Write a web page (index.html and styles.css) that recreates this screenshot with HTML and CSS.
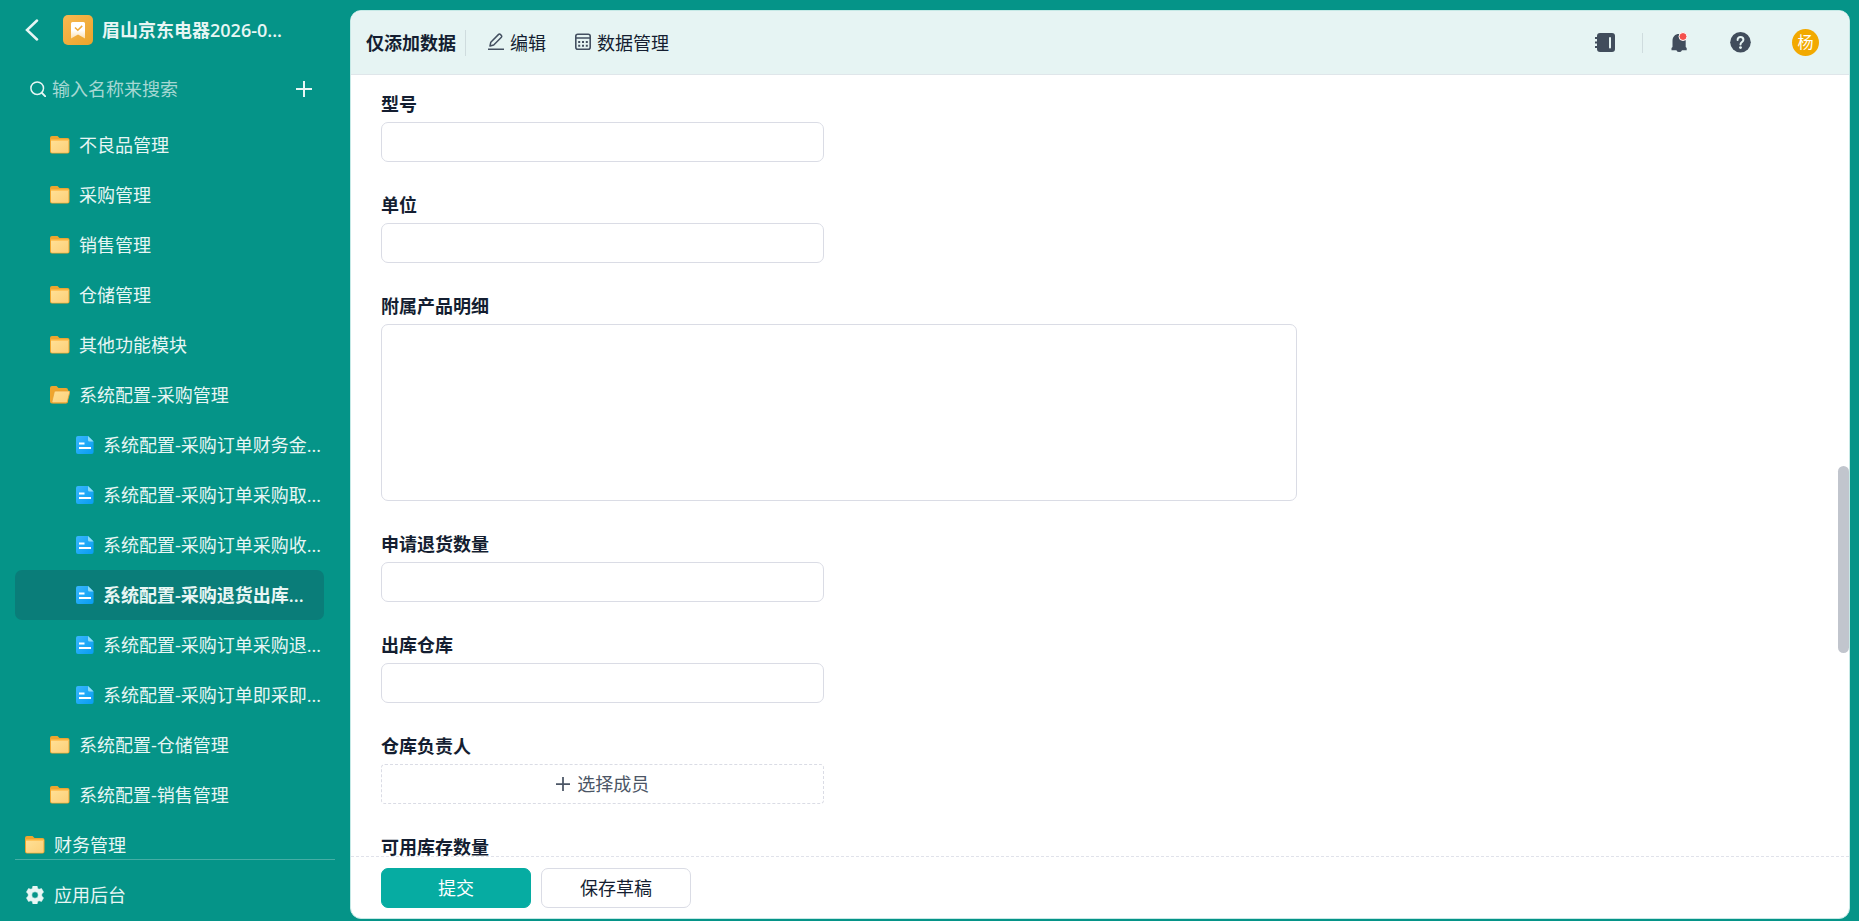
FILE: index.html
```html
<!DOCTYPE html>
<html lang="zh-CN">
<head>
    <meta charset="UTF-8">
    <meta name="viewport" content="width=device-width, initial-scale=1.0">
    <title>仅添加数据</title>
    <link rel="stylesheet" href="styles.css">
</head>
<body>

<!-- shared icons -->
<svg class="sprite" aria-hidden="true">
    <defs>
        <linearGradient id="folder-front" x1="0" y1="0" x2="1" y2="1">
            <stop offset="0" stop-color="#ffe096"/>
            <stop offset="1" stop-color="#fdd078"/>
        </linearGradient>
        <linearGradient id="doc-fill" x1="0" y1="0" x2="1" y2="1">
            <stop offset="0" stop-color="#38b6ff"/>
            <stop offset="1" stop-color="#089cf0"/>
        </linearGradient>
        <linearGradient id="app-fill" x1="0" y1="0" x2="1" y2="1">
            <stop offset="0" stop-color="#f8b851"/>
            <stop offset="1" stop-color="#eba42b"/>
        </linearGradient>
        <linearGradient id="app-flag" x1="0" y1="0" x2="0" y2="1">
            <stop offset="0.5" stop-color="#ffffff"/>
            <stop offset="1" stop-color="#fbdfae"/>
        </linearGradient>
    </defs>
    <symbol id="icon-folder" viewBox="0 0 20 18">
        <path d="M2 0h5.500l2 2H17.500a2 2 0 0 1 2 2v11.500a2 2 0 0 1-2 2H2a2 2 0 0 1-2-2V2a2 2 0 0 1 2-2z" fill="#efa52e"/>
        <path d="M1 4h17.500v11.500a1.200 1.200 0 0 1-1.200 1.200H2.200A1.200 1.200 0 0 1 1 15.500z" fill="url(#folder-front)"/>
        <path d="M1 3.500h17.500v1.500H1z" fill="#ffc45c"/>
    </symbol>
    <symbol id="icon-folder-open" viewBox="0 0 20 18">
        <path d="M2 0h4.500l2 2H16a2 2 0 0 1 2 2v11.500a2 2 0 0 1-2 2H2a2 2 0 0 1-2-2V2a2 2 0 0 1 2-2z" fill="#efa52e"/>
        <path d="M5.800 5h12.700a1.200 1.200 0 0 1 1.200 1.500L17.400 15.600a1.600 1.600 0 0 1-1.600 1.200H3.200a1.200 1.200 0 0 1-1.200-1.500L4.200 6.200A1.600 1.600 0 0 1 5.800 5z" fill="url(#folder-front)" stroke="#e9a030" stroke-width=".8"/>
    </symbol>
    <symbol id="icon-doc" viewBox="0 0 18 18">
        <path d="M2 0h10l5.600 5.600V16a2 2 0 0 1-2 2H2a2 2 0 0 1-2-2V2a2 2 0 0 1 2-2z" fill="url(#doc-fill)"/>
        <path d="M12 0l5.600 5.600h-4.100A1.500 1.500 0 0 1 12 4.100z" fill="#8fdcf8"/>
        <path d="M3 7.500h5.500M3 12h12" stroke="#fff" stroke-width="2"/>
    </symbol>
    <symbol id="icon-plus" viewBox="0 0 16 16">
        <path d="M8 0v16M0 8h16" stroke="currentColor"/>
    </symbol>
</svg>

<div class="app">
    <aside class="sidebar">
        <div class="app-head">
            <button class="icon-btn back" type="button" aria-label="返回">
                <svg width="14" height="22" viewBox="0 0 14 22"><path d="M12 1.500L2 11l10 9.500" fill="none" stroke="currentColor" stroke-width="2.500" stroke-linecap="round"/></svg>
            </button>
            <svg class="app-logo" width="30" height="30" viewBox="0 0 30 30">
                <rect width="30" height="30" rx="5" fill="url(#app-fill)"/>
                <path d="M9.500 7h11a1.500 1.500 0 0 1 1.500 1.500V23.500l-7-4-7 4V8.500A1.500 1.500 0 0 1 9.500 7z" fill="url(#app-flag)"/>
                <path d="M12 12.500l2.800 2.800 4.400-4.400" fill="none" stroke="#efaa38" stroke-width="1.500"/>
            </svg>
            <span class="app-name">眉山京东电器2026-0...</span>
        </div>

        <div class="search">
            <svg width="16" height="16" viewBox="0 0 16 16"><path d="M12 12l3.300 3.300" stroke="currentColor" stroke-width="1.800" stroke-linecap="round"/><circle cx="7.200" cy="7.200" r="6.300" fill="none" stroke="currentColor" stroke-width="1.500"/></svg>
            <input type="text" placeholder="输入名称来搜索" aria-label="输入名称来搜索">
            <button class="icon-btn" type="button" aria-label="新建">
                <svg class="add-icon" width="16" height="16"><use href="#icon-plus"/></svg>
            </button>
        </div>

        <nav class="tree">
            <a href="#" class="node level-2"><svg class="folder"><use href="#icon-folder"/></svg>不良品管理</a>
            <a href="#" class="node level-2"><svg class="folder"><use href="#icon-folder"/></svg>采购管理</a>
            <a href="#" class="node level-2"><svg class="folder"><use href="#icon-folder"/></svg>销售管理</a>
            <a href="#" class="node level-2"><svg class="folder"><use href="#icon-folder"/></svg>仓储管理</a>
            <a href="#" class="node level-2"><svg class="folder"><use href="#icon-folder"/></svg>其他功能模块</a>
            <a href="#" class="node level-2"><svg class="folder"><use href="#icon-folder-open"/></svg>系统配置-采购管理</a>
            <a href="#" class="node level-3"><svg class="doc"><use href="#icon-doc"/></svg>系统配置-采购订单财务金...</a>
            <a href="#" class="node level-3"><svg class="doc"><use href="#icon-doc"/></svg>系统配置-采购订单采购取...</a>
            <a href="#" class="node level-3"><svg class="doc"><use href="#icon-doc"/></svg>系统配置-采购订单采购收...</a>
            <a href="#" class="node level-3 active"><svg class="doc"><use href="#icon-doc"/></svg>系统配置-采购退货出库...</a>
            <a href="#" class="node level-3"><svg class="doc"><use href="#icon-doc"/></svg>系统配置-采购订单采购退...</a>
            <a href="#" class="node level-3"><svg class="doc"><use href="#icon-doc"/></svg>系统配置-采购订单即采即...</a>
            <a href="#" class="node level-2"><svg class="folder"><use href="#icon-folder"/></svg>系统配置-仓储管理</a>
            <a href="#" class="node level-2"><svg class="folder"><use href="#icon-folder"/></svg>系统配置-销售管理</a>
            <a href="#" class="node level-1"><svg class="folder"><use href="#icon-folder"/></svg>财务管理</a>
        </nav>

        <div class="side-foot">
            <a href="#" class="node level-1">
                <svg class="gear" viewBox="0 0 18 18"><path fill-rule="evenodd" d="M6.900 0h4.200l.6 2.500 1.300.75 2.500-.75 2.100 3.600L15.800 8v2l1.800 1.900-2.100 3.600-2.500-.75-1.300.75-.6 2.500H6.900l-.6-2.500-1.300-.75-2.500.75L.4 11.900 2.200 10V8L.4 6.100l2.100-3.600 2.500.75 1.300-.75zM9 5.800a3.200 3.200 0 1 0 0 6.400 3.200 3.200 0 0 0 0-6.400z" fill="currentColor" stroke="currentColor" stroke-width=".5" stroke-linejoin="round"/></svg>应用后台
            </a>
        </div>
    </aside>

    <main class="panel">
        <header class="topbar">
            <h1>仅添加数据</h1>
            <button class="top-btn" type="button">
                <svg width="16" height="20" viewBox="0 0 16 20" fill="none" stroke="currentColor" stroke-width="1.500" stroke-linejoin="round"><path d="M0 16.200h16"/><path d="M2 13l.8-3.800L10.600 1.400a1.200 1.200 0 0 1 1.700 0l1.100 1.100a1.200 1.200 0 0 1 0 1.700L5.700 12z"/></svg>
                编辑
            </button>
            <button class="top-btn" type="button">
                <svg width="16" height="20" viewBox="0 0 16 20" fill="none" stroke="currentColor" stroke-width="1.600"><rect x=".8" y="1.300" width="14.400" height="15" rx="2"/><path d="M.7 5h14.600"/><path d="M3.200 9h9.600M3.200 12.700h9.600" stroke-width="2" stroke-dasharray="2 1.800"/></svg>
                数据管理
            </button>
            <div class="tools">
                <button class="icon-btn" type="button" aria-label="通讯录">
                    <svg width="20" height="20" viewBox="0 0 20 20"><rect x="2" y="0" width="18" height="19" rx="3" fill="currentColor"/><path d="M0 5h4M0 9.500h4M0 14h4" stroke="currentColor" stroke-width="2"/><path d="M15 5v9.500" stroke="#e6f4f3" stroke-width="2" stroke-linecap="round"/></svg>
                </button>
                <span class="split"></span>
                <button class="icon-btn bell" type="button" aria-label="消息">
                    <svg width="18" height="22" viewBox="0 0 18 22"><path d="M8 2c4 0 6.700 2.700 6.700 7v6l1 1v2.200H11a3 3 0 0 1-5.600 0H.5V16l1-1V9c0-4.300 2.500-7 6.500-7z" fill="currentColor"/><circle cx="12" cy="4.500" r="4" fill="#f4504c" stroke="#fff"/></svg>
                </button>
                <button class="icon-btn help" type="button" aria-label="帮助">
                    <svg width="21" height="22" viewBox="0 0 21 22"><circle cx="10.500" cy="10.300" r="10.300" fill="currentColor"/><path d="M7.600 8c0-1.900 1.200-2.900 2.900-2.900s2.900 1 2.900 2.600c0 2.300-2.900 2.300-2.900 4.700" fill="none" stroke="#e6f4f3" stroke-width="2" stroke-linecap="round"/><circle cx="10.500" cy="15.600" r="1.400" fill="#e6f4f3"/></svg>
                </button>
                <button class="avatar" type="button">杨</button>
            </div>
        </header>

        <div class="scroller">
            <form id="record-form" class="fields">
                <div class="field">
                    <label for="model">型号</label>
                    <input type="text" id="model">
                </div>
                <div class="field">
                    <label for="unit">单位</label>
                    <input type="text" id="unit">
                </div>
                <div class="field wide">
                    <label for="detail">附属产品明细</label>
                    <textarea id="detail"></textarea>
                </div>
                <div class="field">
                    <label for="return-qty">申请退货数量</label>
                    <input type="text" id="return-qty">
                </div>
                <div class="field">
                    <label for="warehouse">出库仓库</label>
                    <input type="text" id="warehouse">
                </div>
                <div class="field">
                    <label for="keeper">仓库负责人</label>
                    <button class="member-btn" type="button" id="keeper">
                        <svg width="14" height="14"><use href="#icon-plus"/></svg>
                        选择成员
                    </button>
                </div>
                <div class="field">
                    <label for="stock-qty">可用库存数量</label>
                    <input type="text" id="stock-qty">
                </div>
            </form>
            <div class="scroll-thumb"></div>
        </div>

        <footer class="actions">
            <button class="btn primary" type="submit" form="record-form">提交</button>
            <button class="btn" type="button">保存草稿</button>
        </footer>
    </main>
</div>

</body>
</html>
```

FILE: styles.css
```css
* {
    box-sizing: border-box;
}
body {
    margin: 0;
    background: #059488;
    color: #141e31;
    font-family: "Open Sans", "Noto Sans CJK SC", sans-serif;
    font-size: 18px;
    line-height: 28px;
}
button, input, textarea {
    font: inherit;
    color: inherit;
}
button {
    padding: 0;
    border: none;
    background: none;
    cursor: pointer;
}
svg {
    display: block;
    flex: none;
}
.sprite {
    position: absolute;
    width: 0;
    height: 0;
}
.app {
    display: flex;
    height: 100vh;
}
.icon-btn {
    display: flex;
    align-items: center;
    justify-content: center;
}

/* sidebar */
.sidebar {
    display: flex;
    flex-direction: column;
    flex: none;
    width: 350px;
    color: #e8f6f4;
}
.app-head {
    display: flex;
    align-items: center;
    height: 60px;
    padding-left: 25px;
}
.app-logo {
    margin: 0 9px 0 24px;
}
.app-name {
    font-weight: 600;
    white-space: nowrap;
}
.search {
    display: flex;
    align-items: center;
    height: 60px;
    padding: 0 38px 2px 30px;
}
.search input {
    flex: 1;
    min-width: 0;
    margin-left: 6px;
    padding: 0;
    border: none;
    outline: none;
    background: none;
}
.search input::placeholder {
    color: #a5d8d3;
    opacity: 1;
}
.add-icon {
    stroke-width: 2;
}
.tree {
    flex: 1;
    min-height: 0;
    overflow: hidden;
    padding: 0 26px 0 15px;
}
.node {
    display: flex;
    align-items: center;
    height: 50px;
    border-radius: 7px;
    color: inherit;
    text-decoration: none;
    white-space: nowrap;
}
.node svg {
    margin-right: 9px;
}
.level-1 {
    padding-left: 10px;
}
.level-2 {
    padding-left: 35px;
}
.level-3 {
    padding-left: 61px;
}
.node.active {
    background: #0a7d79;
    font-weight: 600;
}
.folder {
    width: 20px;
    height: 18px;
}
.doc {
    width: 18px;
    height: 18px;
}
.gear {
    width: 20px;
    height: 18px;
}
.side-foot {
    margin: 0 15px;
    padding: 10px 0 1px;
    border-top: 1px solid #45aea5;
}

/* main panel */
.panel {
    display: flex;
    flex-direction: column;
    flex: 1;
    min-width: 0;
    margin: 10px 9px 2px 0;
    overflow: hidden;
    border: 1px solid #c5e9e6;
    border-radius: 11px;
    background: #fff;
}
.topbar {
    display: flex;
    align-items: center;
    flex: none;
    height: 64px;
    padding: 0 30px 0 15px;
    border-bottom: 1px solid #dfe6ea;
    background: #e6f4f3;
}
.topbar h1 {
    margin: 0 22px 0 0;
    padding-right: 9px;
    border-right: 1px solid #cfdcde;
    font-size: 18px;
    line-height: 26px;
}
.top-btn {
    display: flex;
    align-items: center;
    gap: 6px;
    margin-right: 29px;
}
.top-btn svg {
    color: #434f60;
}
.tools {
    display: flex;
    align-items: center;
    margin-left: auto;
    color: #414d5c;
}
.split {
    width: 1px;
    height: 20px;
    margin: 0 28px 0 27px;
    background: #cfdcde;
}
.help {
    margin: 0 41px;
}
.avatar {
    width: 27px;
    height: 27px;
    border-radius: 50%;
    background: #f2a900;
    color: #fff;
    font-size: 16px;
    line-height: 27px;
}

/* form */
.scroller {
    position: relative;
    flex: 1;
    min-height: 0;
    overflow: hidden;
}
.fields {
    display: grid;
    grid-template-columns: repeat(3, 1fr);
    gap: 29px;
    padding: 15px 80px 0 30px;
}
.field {
    display: flex;
    flex-direction: column;
    grid-column: 1;
    gap: 4px;
}
.field.wide {
    grid-column: 1 / span 2;
}
.field label {
    font-weight: bold;
}
.field input, .field textarea, .member-btn {
    width: 100%;
    height: 40px;
    padding: 0 12px;
    border: 1px solid #dadce5;
    border-radius: 7px;
    background: #fff;
}
.field textarea {
    height: 177px;
    resize: none;
}
.member-btn {
    display: flex;
    align-items: center;
    justify-content: center;
    gap: 7px;
    border-style: dashed;
    border-radius: 4px;
    color: #4b5565;
}
.member-btn svg {
    stroke-width: 2;
}
.scroll-thumb {
    position: absolute;
    top: 50%;
    right: 0;
    width: 11px;
    height: 24%;
    border-radius: 6px;
    background: #c1c5cd;
}
.actions {
    display: flex;
    flex: none;
    gap: 10px;
    padding: 11px 30px 10px;
    border-top: 1px dashed #e0e2ea;
}
.btn {
    width: 150px;
    height: 40px;
    border: 1px solid #dadce5;
    border-radius: 7px;
}
.btn.primary {
    border-color: #06aca2;
    background: #06aca2;
    color: #fff;
}
```
